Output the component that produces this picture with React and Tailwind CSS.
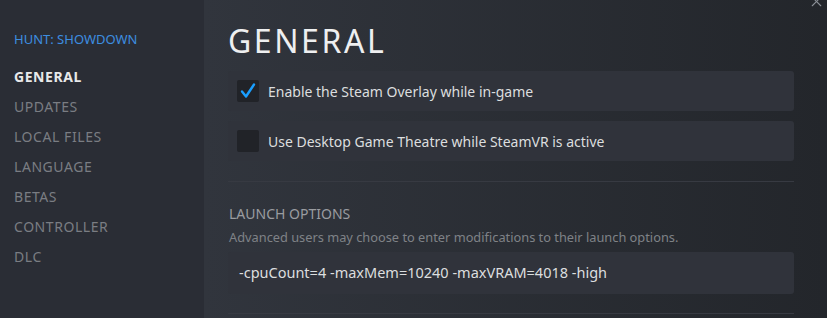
import { X } from 'lucide-react'

const navItems = ['GENERAL', 'UPDATES', 'LOCAL FILES', 'LANGUAGE', 'BETAS', 'CONTROLLER', 'DLC']

function Checkbox({ checked }) {
  return (
    <div className="w-[22px] h-[22px] rounded-[2px] bg-[#212328] flex items-center justify-center shrink-0">
      {checked && (
        <svg width="18" height="18" viewBox="0 0 18 18">
          <path d="M3 9.5 L7 14.5 L15 2.5" fill="none" stroke="#1a9fff" strokeWidth="2.4" strokeLinecap="round" strokeLinejoin="round" />
        </svg>
      )}
    </div>
  )
}

export default function App() {
  return (
    <div className="w-[827px] h-[318px] flex overflow-hidden bg-[#23262b]" style={{ fontFamily: '"Noto Sans", "Open Sans", sans-serif' }}>
      {/* Sidebar */}
      <aside className="w-[204px] shrink-0 bg-[#2a2d35] pt-[30px] pl-[14px]">
        <div className="text-[13px] text-[#3d8ee0] leading-[18px] mb-[13px]">HUNT: SHOWDOWN</div>
        <nav className="flex flex-col">
          {navItems.map((item, i) => (
            <div
              key={item}
              className={`h-[30px] flex items-center text-[14px] tracking-[0.04em] ${i === 0 ? 'text-[#e8e9ea] font-bold tracking-[0.01em]' : 'text-[#7a7d83]'}`}
            >
              {item}
            </div>
          ))}
        </nav>
      </aside>

      {/* Main */}
      <main className="relative flex-1 bg-gradient-to-r from-[#31353d] to-[#23262b] pl-[24px] pr-[33px]">
        <button className="absolute right-[2px] top-[-7px] text-[#8b9097]">
          <X size={17} strokeWidth={1.5} />
        </button>
        <h1 className="text-[32px] leading-none tracking-[0.08em] text-[#eeeff0] pt-[25px]">GENERAL</h1>

        <div className="mt-[14px] flex flex-col gap-[10px]">
          <div className="h-[40px] rounded-[3px] bg-[#30333b] flex items-center pl-[9px] gap-[9px]">
            <Checkbox checked />
            <span className="text-[14px] text-[#dcdedf]">Enable the Steam Overlay while in-game</span>
          </div>
          <div className="h-[40px] rounded-[3px] bg-[#30333b] flex items-center pl-[9px] gap-[9px]">
            <Checkbox />
            <span className="text-[14px] text-[#dcdedf]">Use Desktop Game Theatre while SteamVR is active</span>
          </div>
        </div>

        <div className="mt-[20px] h-px bg-[#373a42]" />

        <div className="mt-[22px] text-[14px] leading-[20px] text-[#9a9ca0] pl-[1px]">LAUNCH OPTIONS</div>
        <div className="mt-[4px] text-[12.8px] leading-[18px] text-[#7f8287] pl-[1px]">
          Advanced users may choose to enter modifications to their launch options.
        </div>
        <div className="mt-[6px] h-[42px] rounded-[3px] bg-[#30333b] flex items-center pl-[11px] text-[14.5px] text-[#dcdedf]">
          -cpuCount=4 -maxMem=10240 -maxVRAM=4018 -high
        </div>

        <div className="mt-[19px] h-px bg-[#373a42]" />
      </main>
    </div>
  )
}
